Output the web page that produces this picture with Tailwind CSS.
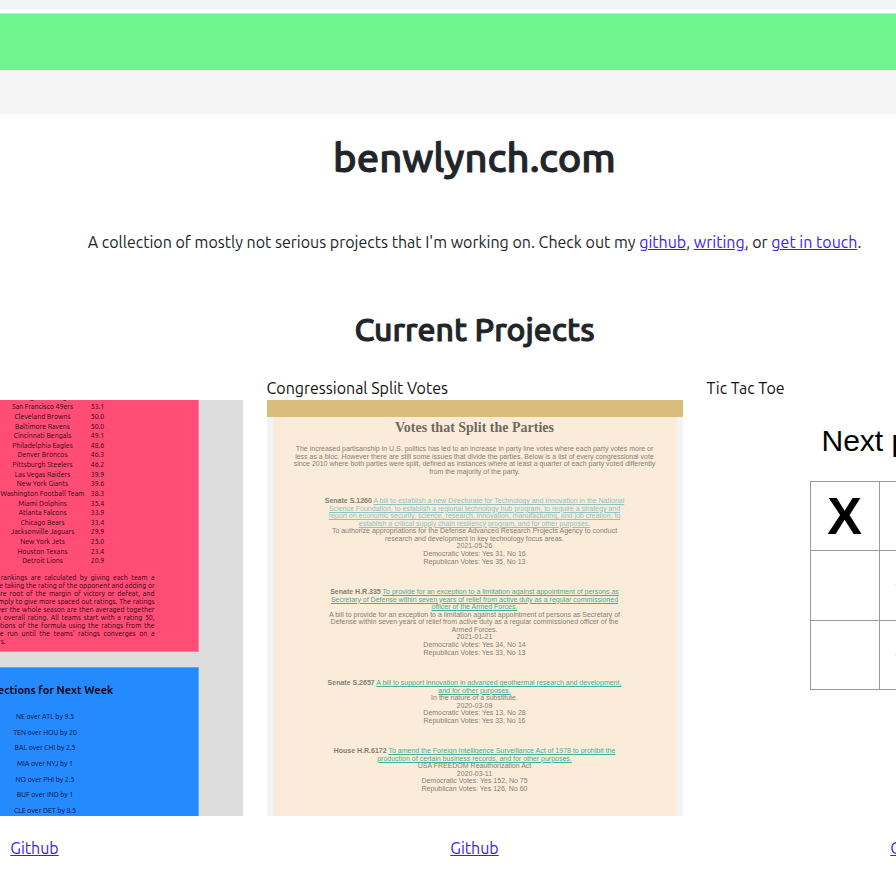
<!DOCTYPE html>
<html lang="en">
<head>
    <meta charset="UTF-8">
    <meta name="viewport" content="width=device-width, initial-scale=1.0">
    <title>benwlynch.com</title>
    <script src="https://cdn.jsdelivr.net/npm/@tailwindcss/browser@4"></script>
</head>
<body class="bg-white text-base leading-6 text-[#212529] font-['Ubuntu','Noto_Sans',sans-serif] overflow-x-hidden">
    <div class="h-[9px] bg-[#f1f3f4]"></div>
    <div class="h-[5px] border-b border-[#d5dcd8]"></div>
    <header class="h-14 bg-[#71f58f]"></header>
    <div class="h-11 bg-[#f5f5f5]"></div>

    <main class="pl-[53px] pt-5 overflow-hidden">
        <h1 class="text-[40px] leading-12 font-medium text-center [-webkit-text-stroke:1px]">benwlynch.com</h1>
        <p class="mt-12 text-center whitespace-nowrap">A collection of mostly not serious projects that I'm working on. Check out my <a href="#" class="text-[#3d1cf5] underline">github</a>, <a href="#" class="text-[#3d1cf5] underline">writing</a>, or <a href="#" class="text-[#3d1cf5] underline">get in touch</a>.</p>
        <h2 class="mt-14 text-[32px] leading-[38px] font-medium text-center [-webkit-text-stroke:1px]">Current Projects</h2>

        <div class="mt-7 pb-9 flex justify-center gap-6 text-[#111111]">
            <!-- NFL power rankings -->
            <section class="w-[416px] shrink-0">
                <h3>NFL Power Rankings</h3>
                <div class="h-[416px] overflow-hidden bg-[#dddddd] pl-[66px] pr-11 text-[7px] leading-2 text-[#2a0410]">
                    <div class="flow-root h-[252px] bg-[#ff4d75] border-r border-b border-[#f4849c]">
                        <table class="-mt-2 ml-[107px] h-[173px] w-[110px] text-center whitespace-nowrap">
                            <tbody>
                                <tr><td class="w-[86px]">Los Angeles Chargers</td><td>54.8</td></tr>
                                <tr><td>San Francisco 49ers</td><td>53.1</td></tr>
                                <tr><td>Cleveland Browns</td><td>50.0</td></tr>
                                <tr><td>Baltimore Ravens</td><td>50.0</td></tr>
                                <tr><td>Cincinnati Bengals</td><td>49.1</td></tr>
                                <tr><td>Philadelphia Eagles</td><td>48.6</td></tr>
                                <tr><td>Denver Broncos</td><td>46.3</td></tr>
                                <tr><td>Pittsburgh Steelers</td><td>46.2</td></tr>
                                <tr><td>Las Vegas Raiders</td><td>39.9</td></tr>
                                <tr><td>New York Giants</td><td>39.6</td></tr>
                                <tr><td>Washington Football Team</td><td>38.3</td></tr>
                                <tr><td>Miami Dolphins</td><td>35.4</td></tr>
                                <tr><td>Atlanta Falcons</td><td>33.9</td></tr>
                                <tr><td>Chicago Bears</td><td>33.4</td></tr>
                                <tr><td>Jacksonville Jaguars</td><td>29.9</td></tr>
                                <tr><td>New York Jets</td><td>25.0</td></tr>
                                <tr><td>Houston Texans</td><td>23.4</td></tr>
                                <tr><td>Detroit Lions</td><td>20.9</td></tr>
                            </tbody>
                        </table>
                        <div class="mt-2 ml-[93px] w-[169px] whitespace-nowrap [text-align-last:justify]">
                            <p>The rankings are calculated by giving each team a</p>
                            <p>game taking the rating of the opponent and adding or</p>
                            <p>square root of the margin of victory or defeat, and</p>
                            <p class="pl-2">simply to give more spaced out ratings. The ratings</p>
                            <p class="pl-2">over the whole season are then averaged together</p>
                            <p class="pl-2">an overall rating. All teams start with a rating 50,</p>
                            <p>iterations of the formula using the ratings from the</p>
                            <p class="pl-2">are run until the teams' ratings converges on a</p>
                            <p class="w-5 flex justify-end">numbers.</p>
                        </div>
                    </div>
                    <div class="mt-[15px] h-[152px] bg-[#268aff] border-t border-r border-[#5aaaf0] text-[#020f38] text-center pt-[14px]">
                        <h4 class="text-[11px] leading-4 font-bold text-[#020a20]">Projections for Next Week</h4>
                        <ul class="mt-[10px] h-[110px] flex flex-col">
                            <li class="flex-1 content-center">NE over ATL by 9.5</li>
                            <li class="flex-1 content-center">TEN over HOU by 20</li>
                            <li class="flex-1 content-center">BAL over CHI by 2.5</li>
                            <li class="flex-1 content-center">MIA over NYJ by 1</li>
                            <li class="flex-1 content-center">NO over PHI by 2.5</li>
                            <li class="flex-1 content-center">BUF over IND by 1</li>
                            <li class="flex-1 content-center">CLE over DET by 8.5</li>
                        </ul>
                    </div>
                </div>
                <p class="mt-5 text-center"><a href="#" class="text-[#3d1cf5] underline">Github</a></p>
            </section>

            <!-- Split votes -->
            <section class="w-[416px] shrink-0">
                <h3>Congressional Split Votes</h3>
                <div class="h-[416px] overflow-hidden bg-[#f1f3f8] text-center whitespace-nowrap font-['Liberation_Sans',sans-serif] text-[7px] leading-[7px] text-[#857e77]">
                    <div class="h-[17px] bg-[#d9be7b]"></div>
                    <div class="h-[399px] overflow-hidden mx-[6px] bg-[#fbecd9] pt-[3px]">
                        <h4 class="font-['Liberation_Serif',serif] text-[14px] leading-4 font-bold text-[#6e6963]">Votes that Split the Parties</h4>
                        <div class="mt-[9px] h-[30px] flex flex-col">
                            <p class="flex-1">The increased partisanship in U.S. politics has led to an increase in party line votes where each party votes more or</p>
                            <p class="flex-1">less as a bloc. However there are still some issues that divide the parties. Below is a list of every congressional vote</p>
                            <p class="flex-1">since 2010 where both parties were split, defined as instances where at least a quarter of each party voted differently</p>
                            <p class="flex-1">from the majority of the party.</p>
                        </div>
                        <div class="mt-[22px] flex flex-col gap-[23px]">
                            <div class="h-[68px] flex flex-col">
                                <p class="flex-1"><b>Senate S.1260</b> <a href="#" class="text-[#8ec3c3] underline">A bill to establish a new Directorate for Technology and Innovation in the National</a></p>
                                <p class="flex-1"><a href="#" class="text-[#8ec3c3] underline">Science Foundation, to establish a regional technology hub program, to require a strategy and</a></p>
                                <p class="flex-1"><a href="#" class="text-[#8ec3c3] underline">report on economic security, science, research, innovation, manufacturing, and job creation, to</a></p>
                                <p class="flex-1"><a href="#" class="text-[#8ec3c3] underline">establish a critical supply chain resiliency program, and for other purposes.</a></p>
                                <p class="flex-1">To authorize appropriations for the Defense Advanced Research Projects Agency to conduct</p>
                                <p class="flex-1">research and development in key technology focus areas.</p>
                                <p class="flex-1">2021-05-26</p>
                                <p class="flex-1">Democratic Votes: Yes 31, No 16</p>
                                <p class="flex-1">Republican Votes: Yes 35, No 13</p>
                            </div>
                            <div class="h-[68px] flex flex-col">
                                <p class="flex-1"><b>Senate H.R.335</b> <a href="#" class="text-[#3fae9b] underline">To provide for an exception to a limitation against appointment of persons as</a></p>
                                <p class="flex-1"><a href="#" class="text-[#3fae9b] underline">Secretary of Defense within seven years of relief from active duty as a regular commissioned</a></p>
                                <p class="flex-1"><a href="#" class="text-[#3fae9b] underline">officer of the Armed Forces.</a></p>
                                <p class="flex-1">A bill to provide for an exception to a limitation against appointment of persons as Secretary of</p>
                                <p class="flex-1">Defense within seven years of relief from active duty as a regular commissioned officer of the</p>
                                <p class="flex-1">Armed Forces.</p>
                                <p class="flex-1">2021-01-21</p>
                                <p class="flex-1">Democratic Votes: Yes 34, No 14</p>
                                <p class="flex-1">Republican Votes: Yes 33, No 13</p>
                            </div>
                            <div class="h-[45px] flex flex-col">
                                <p class="flex-1"><b>Senate S.2657</b> <a href="#" class="text-[#3fae9b] underline">A bill to support innovation in advanced geothermal research and development,</a></p>
                                <p class="flex-1"><a href="#" class="text-[#3fae9b] underline">and for other purposes.</a></p>
                                <p class="flex-1">In the nature of a substitute.</p>
                                <p class="flex-1">2020-03-09</p>
                                <p class="flex-1">Democratic Votes: Yes 13, No 28</p>
                                <p class="flex-1">Republican Votes: Yes 33, No 16</p>
                            </div>
                            <div class="h-[45px] flex flex-col">
                                <p class="flex-1"><b>House H.R.6172</b> <a href="#" class="text-[#3fae9b] underline">To amend the Foreign Intelligence Surveillance Act of 1978 to prohibit the</a></p>
                                <p class="flex-1"><a href="#" class="text-[#3fae9b] underline">production of certain business records, and for other purposes.</a></p>
                                <p class="flex-1">USA FREEDOM Reauthorization Act</p>
                                <p class="flex-1">2020-03-11</p>
                                <p class="flex-1">Democratic Votes: Yes 152, No 75</p>
                                <p class="flex-1">Republican Votes: Yes 126, No 60</p>
                            </div>
                            <p><b>House H.R.6172</b> <a href="#" class="text-[#3fae9b] underline">To authorize leases for terms not to exceed the Department of Homeland</a></p>
                        </div>
                    </div>
                </div>
                <p class="mt-5 text-center"><a href="#" class="text-[#3d1cf5] underline">Github</a></p>
            </section>

            <!-- Tic tac toe -->
            <section class="w-[416px] shrink-0">
                <h3>Tic Tac Toe</h3>
                <div class="h-[416px] pt-[21px] font-['Liberation_Sans',sans-serif] text-black">
                    <p class="ml-[115px] text-[30px] leading-10">Next player: O</p>
                    <div class="mt-5 ml-[103px] size-[209px] grid grid-cols-3 grid-rows-3 gap-px p-px bg-[#999999] text-[52px] font-bold">
                        <button class="bg-white">X</button>
                        <button class="bg-white"></button>
                        <button class="bg-white"></button>
                        <button class="bg-white"></button>
                        <button class="bg-white">O</button>
                        <button class="bg-white"></button>
                        <button class="bg-white"></button>
                        <button class="bg-white">O</button>
                        <button class="bg-white">X</button>
                    </div>
                </div>
                <p class="mt-5 text-center"><a href="#" class="text-[#3d1cf5] underline">Github</a></p>
            </section>
        </div>
    </main>
</body>
</html>
